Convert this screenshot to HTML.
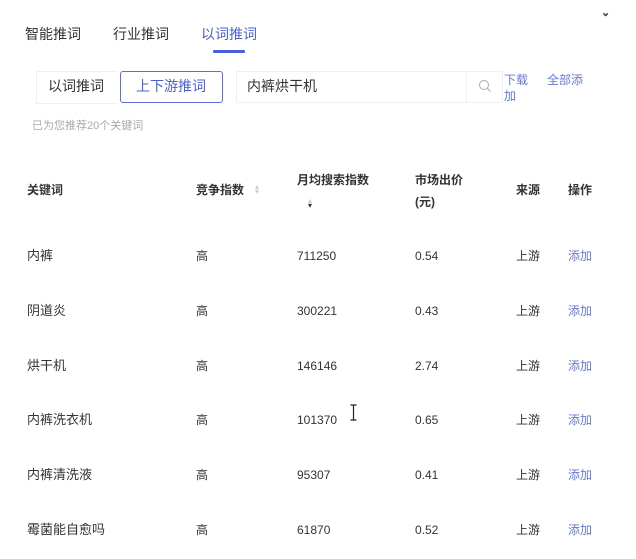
<!DOCTYPE html>
<html><head><meta charset="utf-8"><style>
body{margin:0;width:636px;height:559px;background:#fff;font-family:"Liberation Sans","Noto Sans CJK SC",sans-serif;color:#333;position:relative;overflow:hidden}
.a{position:absolute;white-space:nowrap;line-height:1}
.tab{font-size:14px;color:#333;top:27px}
.h{font-size:12px;font-weight:bold;color:#333}
.c{font-size:13px;color:#333}
.n{font-size:12px;color:#333}
.blue{color:#4a5fd8}
.lb{color:#6478d8}
</style></head><body>
<div class="a" style="left:601px;top:8px;font-size:11px;font-weight:bold">⌄</div>
<div class="a tab" style="left:25px">智能推词</div>
<div class="a tab" style="left:113px">行业推词</div>
<div class="a tab blue" style="left:201px">以词推词</div>
<div class="a" style="left:213px;top:50px;width:32px;height:3px;background:#4a5fd8;border-radius:1px"></div>

<div class="a" style="left:36px;top:71px;width:80px;height:31px;border:1px solid #f0f0f0;border-right:none"></div>
<div class="a" style="left:48px;top:79px;font-size:14px">以词推词</div>
<div class="a" style="left:120px;top:71px;width:101px;height:30px;border:1px solid #5a6fd8;border-radius:3px"></div>
<div class="a blue" style="left:136px;top:79px;font-size:14px">上下游推词</div>
<div class="a" style="left:236px;top:71px;width:265px;height:30px;border:1px solid #f0f0f0"></div>
<div class="a" style="left:466px;top:72px;width:1px;height:30px;background:#f0f0f0"></div>
<div class="a" style="left:247px;top:79px;font-size:14px">内裤烘干机</div>
<svg class="a" style="left:478px;top:79px" width="14" height="14" viewBox="0 0 14 14"><circle cx="6" cy="6" r="4.5" fill="none" stroke="#aaa" stroke-width="1"/><path d="M9.5 9.5L12.5 12.5" stroke="#aaa" stroke-width="1"/></svg>
<div class="a lb" style="left:504px;top:74px;font-size:12px">下载</div>
<div class="a lb" style="left:504px;top:90px;font-size:12px">加</div>
<div class="a lb" style="left:547px;top:74px;font-size:12px">全部添</div>
<div class="a" style="left:32px;top:121px;font-size:11px;color:#aaa">已为您推荐20个关键词</div>

<div class="a h" style="left:27px;top:184px">关键词</div>
<div class="a h" style="left:196px;top:184px">竞争指数</div>
<div class="a" style="left:255px;top:184px;font-size:8px;color:#ccc;line-height:5px">▴<br>▾</div>
<div class="a h" style="left:297px;top:174px">月均搜索指数</div>
<div class="a" style="left:308px;top:198px;font-size:8px;line-height:5px"><span style="color:#ccc">▴</span><br>▾</div>
<div class="a h" style="left:415px;top:174px">市场出价</div>
<div class="a h" style="left:415px;top:196px">(元)</div>
<div class="a h" style="left:516px;top:184px">来源</div>
<div class="a h" style="left:568px;top:184px">操作</div>

<div class="a c" style="left:27px;top:249px">内裤</div><div class="a n" style="left:196px;top:250px">高</div><div class="a n" style="left:297px;top:250px">711250</div><div class="a n" style="left:415px;top:250px">0.54</div><div class="a n" style="left:516px;top:250px">上游</div><div class="a n lb" style="left:568px;top:250px">添加</div>
<div class="a c" style="left:27px;top:304px">阴道炎</div><div class="a n" style="left:196px;top:305px">高</div><div class="a n" style="left:297px;top:305px">300221</div><div class="a n" style="left:415px;top:305px">0.43</div><div class="a n" style="left:516px;top:305px">上游</div><div class="a n lb" style="left:568px;top:305px">添加</div>
<div class="a c" style="left:27px;top:359px">烘干机</div><div class="a n" style="left:196px;top:360px">高</div><div class="a n" style="left:297px;top:360px">146146</div><div class="a n" style="left:415px;top:360px">2.74</div><div class="a n" style="left:516px;top:360px">上游</div><div class="a n lb" style="left:568px;top:360px">添加</div>
<div class="a c" style="left:27px;top:413px">内裤洗衣机</div><div class="a n" style="left:196px;top:414px">高</div><div class="a n" style="left:297px;top:414px">101370</div><div class="a n" style="left:415px;top:414px">0.65</div><div class="a n" style="left:516px;top:414px">上游</div><div class="a n lb" style="left:568px;top:414px">添加</div>
<div class="a c" style="left:27px;top:468px">内裤清洗液</div><div class="a n" style="left:196px;top:469px">高</div><div class="a n" style="left:297px;top:469px">95307</div><div class="a n" style="left:415px;top:469px">0.41</div><div class="a n" style="left:516px;top:469px">上游</div><div class="a n lb" style="left:568px;top:469px">添加</div>
<div class="a c" style="left:27px;top:523px">霉菌能自愈吗</div><div class="a n" style="left:196px;top:524px">高</div><div class="a n" style="left:297px;top:524px">61870</div><div class="a n" style="left:415px;top:524px">0.52</div><div class="a n" style="left:516px;top:524px">上游</div><div class="a n lb" style="left:568px;top:524px">添加</div>

<svg class="a" style="left:349px;top:404px" width="9" height="17" viewBox="0 0 9 17"><path d="M1.5 1H7.5M4.5 1V16M1.5 16H7.5" stroke="#222" stroke-width="1.2" fill="none"/></svg>
</body></html>
